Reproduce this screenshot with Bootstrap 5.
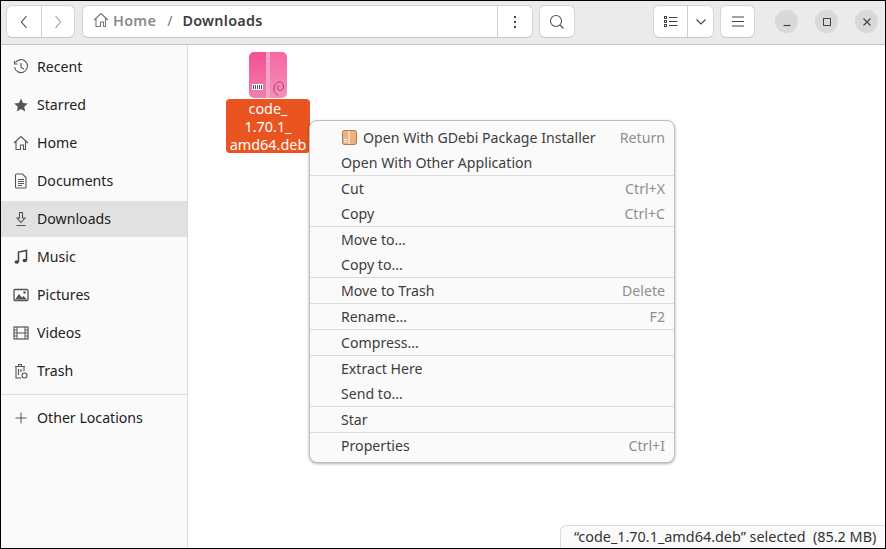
<!DOCTYPE html>
<html lang="en"><head><meta charset="utf-8"><title>Downloads</title>
<link rel="stylesheet" href="https://cdn.jsdelivr.net/npm/bootstrap@5.3.0/dist/css/bootstrap.min.css">
<style>
html,body{height:100%;margin:0;background:#000;overflow:hidden}
body{font-family:"Noto Sans","Open Sans",sans-serif;font-size:14.15px;color:#2f2f2f}
svg{display:block;flex:none}
.win{width:884px;height:547px;margin:1px 0 0 1px;background:#fff;position:relative;overflow:hidden}
.hdr{height:44px;background:#ebebeb;border-bottom:1px solid #c4c4c4;padding:4px 5px 0;flex:none}
.tb{height:33px;background:#fff;border:1px solid #d4d4d4;border-bottom-color:#c6c6c6;border-radius:6px;display:flex;align-items:center;justify-content:center;color:#444;flex:none}
.seg{height:100%;display:flex;align-items:center;justify-content:center;border-right:1px solid #d0d0d0}
.seg:last-child{border-right:0}
.path-in{padding:0 0 2px 10px}
.crumb{font-weight:600;font-size:14.4px;letter-spacing:.02em}
.crumb-sep{color:#777;margin:0 10px 0 11px}
.gap-s{margin-left:6px}
.gap-p{margin-left:7px}
.wc{width:23px;height:23px;border-radius:50%;background:#d9d9d9;display:flex;align-items:center;justify-content:center;flex:none;margin:5px 0 0 17px}
.wc.first{margin-left:20px}
.side{width:187px;background:#fafafa;border-right:1px solid #dcdcdc;flex:none;padding-top:4px}
.sit{height:36px;margin-bottom:2px;display:flex;align-items:center;padding-left:12px;gap:8px;color:#222}
.sit svg{width:16px;height:16px}
.sit.on{background:#e1e1e1}
.sit-sep{border-top:1px solid #dddddd;margin-top:5px;height:1px}
.sit.last{margin-top:5px}
.pane{flex:1;padding:7px 0 0 38px}
.fil{width:84px}
.fname{background:#e95420;color:#fff;border-radius:4px;text-align:center;line-height:18px;height:54px;padding-top:1px;margin-top:1px;font-size:14.4px}
.ctx{position:absolute;left:308px;top:119px;width:366px;height:343px;background:#fafafa;border:1px solid #bdbdbd;border-radius:8px;box-shadow:0 1px 3px rgba(0,0,0,.3);padding-top:4px;color:#3d3d3d}
.mi{height:25px;display:flex;align-items:center;justify-content:space-between;padding:0 9px 0 31px}
.mi .k{color:#8e8e8e}
.mi-ic{gap:6px;margin-left:1px}
.ms{height:1px;background:#dcdcdc}
.status{position:absolute;right:0;bottom:0;width:325px;height:23px;background:#fafafa;border:1px solid #dadada;border-right:0;border-bottom:0;border-top-left-radius:6px;padding-left:13px;line-height:21px;color:#333;white-space:nowrap;font-size:14.4px}
</style></head><body>
<div class="win d-flex flex-column">
 <div class="hdr d-flex align-items-start">
  <div class="tb" style="width:69px">
   <div class="seg" style="width:35px"><svg width="10" height="16" viewBox="0 0 10 16"><path d="M7.500 2 2.500 8l5 6" fill="none" stroke="#444" stroke-width="1.100"/></svg></div>
   <div class="seg" style="width:32px"><svg width="10" height="16" viewBox="0 0 10 16"><path d="M2.500 2l5 6-5 6" fill="none" stroke="#999" stroke-width="1.100"/></svg></div>
  </div>
  <div class="tb gap-p justify-content-start" style="width:451px">
   <div class="seg justify-content-start" style="width:415px">
    <div class="path-in d-flex align-items-center">
    <svg width="16" height="16" viewBox="0 0 16 16"><path d="M1 8 8 1.500 15 8M3 6.500V14.500h4.500V10h3v4.500h2V6.500" fill="none" stroke="#777" stroke-width="1.100"/></svg>
    <span class="crumb ms-1" style="color:#8a8a8a">Home</span>
    <span class="crumb-sep">/</span>
    <span class="crumb" style="color:#3d3d3d">Downloads</span>
    </div>
   </div>
   <div class="seg" style="width:34px"><svg width="4" height="12" viewBox="0 0 4 12"><g fill="#444"><rect x="1" y="0" width="2" height="2"/><rect x="1" y="5" width="2" height="2"/><rect x="1" y="10" width="2" height="2"/></g></svg></div>
  </div>
  <div class="tb gap-s" style="width:36px"><svg width="16" height="16" viewBox="0 0 16 16"><circle cx="7" cy="7" r="5.500" fill="none" stroke="#555" stroke-width="1.100"/><path d="M11 11l3.500 3.500" stroke="#555" stroke-width="1.300"/></svg></div>
  <div class="tb" style="width:61px;margin-left:78px">
   <div class="seg" style="width:35px"><svg width="14" height="12" viewBox="0 0 14 12"><g fill="none" stroke="#444"><rect x=".5" y=".5" width="2" height="2"/><rect x=".5" y="4.500" width="2" height="2"/><rect x=".5" y="8.500" width="2" height="2"/><path d="M5 1.500h8.500M5 5.500h8.500M5 9.500h8.500"/></g></svg></div>
   <div class="seg" style="width:25px"><svg width="12" height="8" viewBox="0 0 12 8"><path d="M1.500 1.500 6 6l4.500-4.500" fill="none" stroke="#444" stroke-width="1.100"/></svg></div>
  </div>
  <div class="tb gap-s" style="width:35px"><svg width="12" height="11" viewBox="0 0 12 11"><path d="M0 1h12M0 5.500h12M0 10h12" stroke="#444" stroke-width="1"/></svg></div>
  <div class="wc first"><svg width="10" height="10" viewBox="0 0 10 10"><path d="M1.500 8.500h7" stroke="#444" stroke-width="1.200"/></svg></div>
  <div class="wc"><svg width="10" height="10" viewBox="0 0 10 10"><rect x="1.500" y="1.500" width="7" height="7" fill="none" stroke="#444"/></svg></div>
  <div class="wc"><svg width="10" height="10" viewBox="0 0 10 10"><path d="M1.500 1.500l7 7M8.500 1.500l-7 7" stroke="#444" stroke-width="1.200"/></svg></div>
 </div>
 <div class="d-flex flex-grow-1" style="min-height:0">
  <div class="side">
   <div class="sit"><svg viewBox="0 0 16 16"><path d="M2.500 3.500A6.500 6.500 0 1 1 1.500 8" fill="none" stroke="#555" stroke-width="1.100"/><path d="M1.500 2v3h3M8 4v4.500l3 1.500" fill="none" stroke="#555" stroke-width="1.100"/></svg><span>Recent</span></div>
   <div class="sit"><svg viewBox="0 0 16 16"><path d="M8 1.500l2 4.500 4.800.5-3.600 3.200 1 4.800L8 12.100 3.800 14.500l1-4.800L1.200 6.500 6 6z" fill="#555"/></svg><span>Starred</span></div>
   <div class="sit"><svg viewBox="0 0 16 16"><path d="M1 8 8 1.500 15 8M3 6.500V14.500h4.500V10h3v4.500h2V6.500" fill="none" stroke="#555" stroke-width="1.100"/></svg><span>Home</span></div>
   <div class="sit"><svg viewBox="0 0 16 16"><path d="M3.500 1h6l3.500 3.500V14a1 1 0 0 1-1 1h-8.500a1 1 0 0 1-1-1V2a1 1 0 0 1 1-1z" fill="none" stroke="#555" stroke-width="1.100"/><path d="M5 6.500h6M5 8.500h6M5 10.500h6M5 12.500h4" stroke="#555"/></svg><span>Documents</span></div>
   <div class="sit on"><svg viewBox="0 0 16 16"><path d="M6.500 1.500h3V7h2.500L8 11.500 4 7h2.500zM3.500 14.500h9" fill="none" stroke="#555" stroke-width="1.100"/></svg><span>Downloads</span></div>
   <div class="sit"><svg viewBox="0 0 16 16"><path d="M5.500 12.500V3l8-1.500V11" fill="none" stroke="#444" stroke-width="1.500"/><ellipse cx="3.800" cy="13" rx="2.300" ry="1.800" fill="#444"/><ellipse cx="11.800" cy="11.500" rx="2.300" ry="1.800" fill="#444"/></svg><span>Music</span></div>
   <div class="sit"><svg viewBox="0 0 16 16"><rect x="1" y="2.500" width="14" height="11" rx="1" fill="none" stroke="#555" stroke-width="1.300"/><path d="M2 12.500 6 7l3 3.500 1.500-1.500 3.500 3.500z" fill="#555"/><circle cx="11.500" cy="5.500" r="1.200" fill="#555"/></svg><span>Pictures</span></div>
   <div class="sit"><svg viewBox="0 0 16 16"><rect x="1" y="2" width="14" height="12" fill="none" stroke="#555" stroke-width="1.200"/><path d="M4 2v12M12 2v12M4 8h8M1 5h3M1 8h3M1 11h3M12 5h3M12 8h3M12 11h3" stroke="#555"/></svg><span>Videos</span></div>
   <div class="sit"><svg viewBox="0 0 16 16"><path d="M2 3.500h10M5.500 3.500V1.500h3v2M3 3.500V15h5M11 3.500V8M5.500 6v6M8 6v3" fill="none" stroke="#555" stroke-width="1.100"/><circle cx="11.500" cy="12.500" r="2.500" fill="none" stroke="#555" stroke-width="1.100"/></svg><span>Trash</span></div>
   <div class="sit-sep"></div>
   <div class="sit last"><svg viewBox="0 0 16 16"><path d="M8 2.500v11M2.500 8h11" stroke="#555" stroke-width="1"/></svg><span>Other Locations</span></div>
  </div>
  <div class="pane">
   <div class="fil">
    <svg class="mx-auto" width="38" height="46" viewBox="0 0 38 46">
     <defs><linearGradient id="pk" x1="0" y1="0" x2="0" y2="1"><stop offset="0" stop-color="#f64f92"/><stop offset="1" stop-color="#ef7fb0"/></linearGradient></defs>
     <rect width="38" height="46" rx="5" fill="url(#pk)"/>
     <rect x="17" width="4" height="46" fill="#f6a3c6"/>
     <path d="M21 0h12a5 5 0 0 1 5 5v36a5 5 0 0 1-5 5H21z" fill="#fff" opacity=".14"/>
     <rect x="3" y="32" width="11" height="6" fill="#fff"/>
     <path d="M4.500 33v4M6.500 33v4M8.500 33v4M10.500 33v4M12.500 33v4" stroke="#555" stroke-width="1"/>
     <path d="M29 43c-3.500-1-5-5-3.500-9s6-5.500 8-2.500 .8 7-2.200 7-3.800-4-1.300-5" fill="none" stroke="#c4306f" stroke-width="1"/>
    </svg>
    <div class="fname">code_<br>1.70.1_<br>amd64.deb</div>
   </div>
  </div>
 </div>
 <div class="ctx">
  <div class="mi"><span class="d-flex align-items-center mi-ic"><svg width="15" height="15" viewBox="0 0 15 15"><rect x=".5" y=".5" width="14" height="14" rx="2" fill="#eeb27c" stroke="#a97b55"/><rect x="6" y="1" width="2" height="13" fill="#f8dcc0"/><rect x="2" y="9" width="3" height="1" fill="#fff"/><rect x="2" y="11" width="3" height="1" fill="#fff"/></svg><span>Open With GDebi Package Installer</span></span><span class="k">Return</span></div>
  <div class="mi"><span>Open With Other Application</span></div>
  <div class="ms"></div>
  <div class="mi"><span>Cut</span><span class="k">Ctrl+X</span></div>
  <div class="mi"><span>Copy</span><span class="k">Ctrl+C</span></div>
  <div class="ms"></div>
  <div class="mi"><span>Move to…</span></div>
  <div class="mi"><span>Copy to…</span></div>
  <div class="ms"></div>
  <div class="mi"><span>Move to Trash</span><span class="k">Delete</span></div>
  <div class="ms"></div>
  <div class="mi"><span>Rename…</span><span class="k">F2</span></div>
  <div class="ms"></div>
  <div class="mi"><span>Compress…</span></div>
  <div class="ms"></div>
  <div class="mi"><span>Extract Here</span></div>
  <div class="mi"><span>Send to…</span></div>
  <div class="ms"></div>
  <div class="mi"><span>Star</span></div>
  <div class="ms"></div>
  <div class="mi"><span>Properties</span><span class="k">Ctrl+I</span></div>
 </div>
 <div class="status">“code_1.70.1_amd64.deb” selected&nbsp; (85.2 MB)</div>
</div>
<script src="https://cdn.jsdelivr.net/npm/bootstrap@5.3.0/dist/js/bootstrap.bundle.min.js"></script>
</body></html>
